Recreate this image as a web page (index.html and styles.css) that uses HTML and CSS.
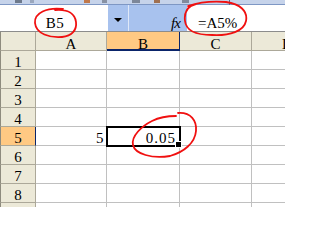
FILE: index.html
```html
<!DOCTYPE html>
<html>
<head>
<meta charset="utf-8">
<link rel="stylesheet" href="styles.css">
</head>
<body>
<div class="app">
  <div class="toolbar">
    <span class="bit b1"></span><span class="bit b2"></span><span class="bit b3"></span><span class="bit b4"></span><span class="bit b5"></span><span class="bit b6"></span><span class="bit b7"></span><span class="bit b8"></span>
  </div>
  <div class="fbar">
    <div class="namebox">B5</div>
    <div class="dd"><span class="tri"></span></div>
    <div class="sep"></div>
    <div class="fx">fx</div>
    <div class="formula">=A5%</div>
  </div>
  <div class="sheet">
    <div class="hd corner"></div><div class="hd col">A</div><div class="hd col sel">B</div><div class="hd col">C</div><div class="hd col">D</div>
    <div class="hd row">1</div><div class="c"></div><div class="c"></div><div class="c"></div><div class="c"></div>
    <div class="hd row">2</div><div class="c"></div><div class="c"></div><div class="c"></div><div class="c"></div>
    <div class="hd row">3</div><div class="c"></div><div class="c"></div><div class="c"></div><div class="c"></div>
    <div class="hd row">4</div><div class="c"></div><div class="c"></div><div class="c"></div><div class="c"></div>
    <div class="hd row sel">5</div><div class="c num">5</div><div class="c num active">0.05<span class="handle"></span></div><div class="c"></div><div class="c"></div>
    <div class="hd row">6</div><div class="c"></div><div class="c"></div><div class="c"></div><div class="c"></div>
    <div class="hd row">7</div><div class="c"></div><div class="c"></div><div class="c"></div><div class="c"></div>
    <div class="hd row">8</div><div class="c"></div><div class="c"></div><div class="c"></div><div class="c"></div>
    <div class="hd row"></div><div class="c"></div><div class="c"></div><div class="c"></div><div class="c"></div>
  </div>
  <svg class="marks" width="285" height="207" viewBox="0 0 285 207">
    <path d="M63 9 C47 7 34 13 35 23 C36 34 50 38 62 37 C72 36 77 30 76 22 C75 14 68 9 55 10" />
    <path d="M196 4 C187 6 184 13 185 21 C186 30 195 35 212 35 C230 36 244 31 246 21 C248 11 240 4 226 2 C214 1 200 2 188 6" />
    <path d="M178 113 C191 112 197 121 196 131 C195 143 184 152 170 156 C152 159 135 154 133 145 C131 136 142 126 152 121 C160 117 168 116 176 116" />
  </svg>
</div>
</body>
</html>
```

FILE: styles.css
```css
* { box-sizing: border-box; }
html, body { margin: 0; padding: 0; }
body {
  width: 285px;
  height: 207px;
  overflow: hidden;
  background: #ffffff;
  font-family: "Liberation Serif", "DejaVu Serif", serif;
  color: #000000;
}
.app {
  position: relative;
  width: 285px;
  height: 207px;
  overflow: hidden;
}
.toolbar {
  height: 5px;
  background: #c6d3ea;
  border-bottom: 1px solid #7e97c4;
  display: flex;
  align-items: flex-start;
}
.bit { height: 3px; display: block; }
.b1 { width: 7px; margin-left: 15px; background: #6e7a8c; }
.b2 { width: 4px; margin-left: 8px; background: #9aa7bd; }
.b3 { width: 6px; margin-left: 50px; background: #c0784a; }
.b4 { width: 5px; margin-left: 12px; background: #8892a4; }
.b5 { width: 8px; margin-left: 25px; background: #7d8799; }
.b6 { width: 6px; margin-left: 14px; background: #a07050; }
.b7 { width: 7px; margin-left: 22px; background: #808a9c; }
.b8 { width: 1px; height: 5px; margin-left: 40px; background: #5a6a88; }

.fbar {
  height: 27px;
  background: #a8c2ee;
  display: flex;
  border-bottom: 1px solid #8c8c8c;
}
.namebox {
  width: 108px;
  background: #ffffff;
  font-size: 15px;
  line-height: 16px;
  text-align: center;
  padding-top: 10px;
  padding-left: 2px;
  letter-spacing: 0.5px;
}
.dd {
  width: 20px;
  display: flex;
  align-items: center;
  justify-content: center;
  padding-top: 4px;
}
.tri {
  width: 0;
  height: 0;
  border-left: 4px solid transparent;
  border-right: 4px solid transparent;
  border-top: 4px solid #000000;
}
.sep {
  width: 1px;
  background: #dfe8f8;
  margin-right: 42px;
}
.fx {
  width: 16px;
  font-style: italic;
  font-size: 15px;
  line-height: 16px;
  padding-top: 10px;
  letter-spacing: -1px;
}
.formula {
  flex: 1;
  background: #ffffff;
  font-size: 15px;
  line-height: 16px;
  padding-top: 10px;
  padding-left: 11px;
}

.sheet {
  display: grid;
  grid-template-columns: 36px 71px 73px 72px 72px;
  grid-auto-rows: 19px;
}
.hd {
  background: #ece9d8;
  border-right: 1px solid #aca899;
  border-bottom: 1px solid #aca899;
  font-size: 15px;
  line-height: 16px;
  text-align: center;
  padding-top: 3px;
}
.corner { border-left: 1px solid #8e8b7e; }
.col { padding-top: 4px; }
.row { border-left: 1px solid #8e8b7e; }
.hd.sel { background: #ffc983; }
.col.sel { border-bottom: 2px solid #0a246a; border-right: 1px solid #0a246a; }
.row.sel { border-right: 1px solid #0a246a; }
.c {
  border-right: 1px solid #c0c0c0;
  border-bottom: 1px solid #c0c0c0;
  font-size: 15px;
  line-height: 16px;
  padding-top: 3px;
}
.num { text-align: right; padding-right: 2px; letter-spacing: 0.5px; }
.active {
  position: relative;
  outline: 2px solid #000000;
  outline-offset: -1px;
  padding-right: 3px;
  letter-spacing: 1px;
}
.handle {
  position: absolute;
  right: -3px;
  bottom: -3px;
  width: 5px;
  height: 5px;
  background: #000000;
  border: 1px solid #ffffff;
  box-sizing: content-box;
}
.marks {
  position: absolute;
  left: 0;
  top: 0;
  pointer-events: none;
}
.marks path {
  fill: none;
  stroke: #f01010;
  stroke-width: 1.8;
  stroke-linecap: round;
}
```
